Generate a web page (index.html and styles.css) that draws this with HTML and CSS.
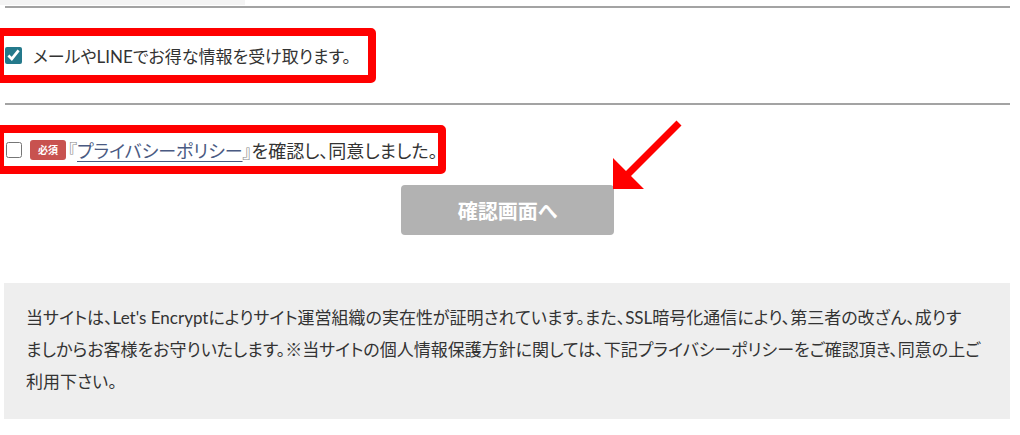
FILE: index.html
```html
<!DOCTYPE html>
<html lang="ja">
<head>
  <meta charset="UTF-8" />
  <meta name="viewport" content="width=device-width, initial-scale=1" />
  <title>お問い合わせ確認</title>
  <link rel="stylesheet" href="styles.css">
</head>
<body>
  <div class="page">
    <div class="top-strip"></div>
    <hr class="rule" />

    <div class="field">
      <label class="consent">
        <input type="checkbox" class="check" checked />
        <span>メールやLINEでお得な情報を受け取ります。</span>
      </label>
    </div>

    <hr class="rule" />

    <div class="field">
      <label class="consent consent-policy">
        <input type="checkbox" class="check check-off" />
        <span class="badge">必須</span>
        <span class="policy-text"><span class="bracket">『</span><a href="#" class="policy-link">プライバシーポリシー</a><span class="bracket">』</span>を確認し、同意しました。</span>
      </label>
    </div>

    <div class="actions">
      <button class="submit-btn" disabled>確認画面へ</button>
    </div>

    <!-- 注釈の矢印 -->
    <svg class="pointer" viewBox="605 115 85 80" width="85" height="80">
      <polygon fill="#f00" points="613,189 613,158 626,171 676.5,120.5 681.5,125.5 631,176 644,189" />
    </svg>

    <div class="notice">
      当サイトは、Let's Encryptによりサイト運営組織の実在性が証明されています。また、SSL暗号化通信により、第三者の改ざん、成りす<br>ましからお客様をお守りいたします。※当サイトの個人情報保護方針に関しては、下記プライバシーポリシーをご確認頂き、同意の上ご利用下さい。
    </div>
  </div>
</body>
</html>
```

FILE: styles.css
```css
*, *::before, *::after {
  box-sizing: border-box; margin: 0; padding: 0;
}
body {
  font-family: Lato, "Noto Sans CJK JP", sans-serif;
  background: #fff;
  color: #333;
  font-feature-settings: "palt";
}
.page {
  position: relative;
  width: 1020px;
  height: 435px;
  overflow: hidden;
}
.top-strip {
  width: 245px;
  height: 5px;
  background: #f4f4f4;
}
.rule {
  border: none;
  border-top: 2px solid #a3a3a3;
  margin: 1px 10px 0 5px;
}
.field {
  padding: 20px 0 19px;
}
.consent {
  display: inline-flex;
  align-items: center;
  margin-left: -4px;
  border: 8px solid #f00;
  border-radius: 5px;
  height: 55px;
  padding: 0 17px 0 1px;
  font-size: 17px;
  color: #333;
  gap: 11px;
  cursor: pointer;
}
.check {
  width: 17px;
  height: 17px;
  accent-color: #24798b;
  flex-shrink: 0;
}
.consent-policy {
  height: 49px;
  padding: 0 0 0 2px;
  gap: 8px;
  font-size: 18px;
}
.check-off {
  width: 16px;
  height: 16px;
}
.badge {
  display: inline-block;
  width: 36px;
  height: 20px;
  line-height: 20px;
  text-align: center;
  background: #c8524f;
  color: #fff;
  font-size: 10px;
  font-weight: 700;
  border-radius: 3px;
}
.policy-text {
  margin-left: -6px;
}
.bracket {
  color: #888;
}
.policy-link {
  color: #4a5a82;
  text-decoration: underline;
  text-underline-offset: 3px;
}
.actions {
  display: flex;
  justify-content: center;
  padding: 0 10px 0 5px;
  margin-top: -8px;
}
.submit-btn {
  width: 213px;
  height: 50px;
  background: #b2b2b2;
  color: #fff;
  border: none;
  border-radius: 4px;
  font-family: inherit;
  font-feature-settings: "palt";
  font-size: 20px;
  font-weight: 700;
}
.pointer {
  position: absolute;
  left: 605px;
  top: 115px;
}
.notice {
  margin: 48px 10px 0 4px;
  background: #eee;
  padding: 19px 20px 21px 22px;
  font-size: 17px;
  line-height: 32px;
  color: #333;
}
```
